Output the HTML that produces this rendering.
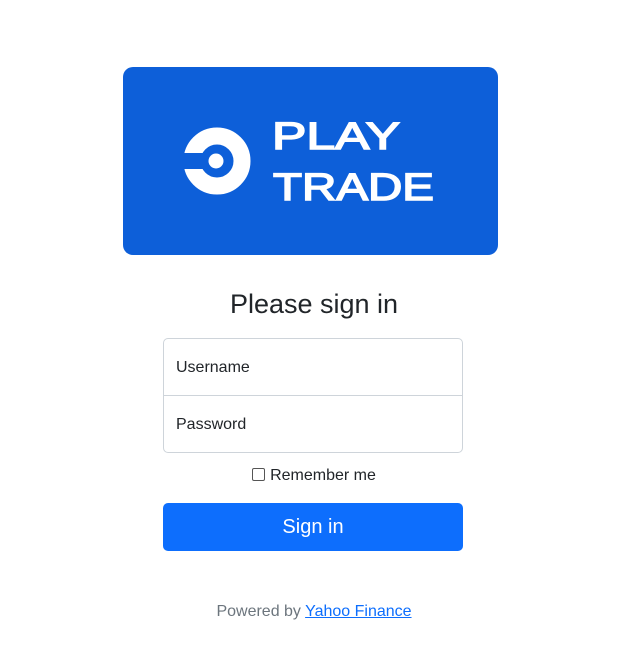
<!DOCTYPE html>
<html><head><style>
body{margin:0;background:#fff;font-family:"Liberation Sans",sans-serif;color:#212529;}
.logo{position:absolute;left:123px;top:67px;width:375px;height:188px;background:#0d5fd9;border-radius:10px;}
h1{position:absolute;top:289px;left:0;width:628px;text-align:center;margin:0;font-weight:400;font-size:27px;}
.box{position:absolute;left:163px;top:338px;width:298px;height:113px;border:1px solid #ced4da;border-radius:5px;}
.box div{height:56px;line-height:58px;padding-left:12px;font-size:16px;}
.box div:first-child{border-bottom:1px solid #ced4da;}
.rem{position:absolute;top:467px;left:0;width:628px;text-align:center;font-size:16px;}
.rem span{display:inline-block;width:11px;height:11px;border:1px solid #555;border-radius:2px;vertical-align:-1px;margin-right:5px;}
.btn{position:absolute;left:163px;top:503px;width:300px;height:48px;background:#0d6efd;border-radius:5px;color:#fff;font-size:20px;text-align:center;line-height:48px;}
.foot{position:absolute;top:603px;left:0;width:628px;text-align:center;font-size:16px;color:#6c757d;}
.foot a{color:#0d6efd;text-decoration:underline;}
</style></head><body>
<div class="logo"><svg width="375" height="188" viewBox="0 0 375 188">
<circle cx="94" cy="94" r="25" fill="none" stroke="#fff" stroke-width="17"/>
<rect x="58" y="86" width="28" height="16" fill="#0d5fd9"/>
<circle cx="93" cy="94" r="7.5" fill="#fff"/>
<text x="149" y="82" font-family="Liberation Sans" font-weight="400" font-size="38" stroke="#fff" stroke-width="1.5" fill="#fff" textLength="128" lengthAdjust="spacingAndGlyphs">PLAY</text>
<text x="150" y="133" font-family="Liberation Sans" font-weight="400" font-size="38" stroke="#fff" stroke-width="1.5" fill="#fff" textLength="161" lengthAdjust="spacingAndGlyphs">TRADE</text>
</svg></div>
<h1>Please sign in</h1>
<div class="box"><div>Username</div><div>Password</div></div>
<div class="rem"><span></span>Remember me</div>
<div class="btn">Sign in</div>
<div class="foot">Powered by <a>Yahoo Finance</a></div>
</body></html>
